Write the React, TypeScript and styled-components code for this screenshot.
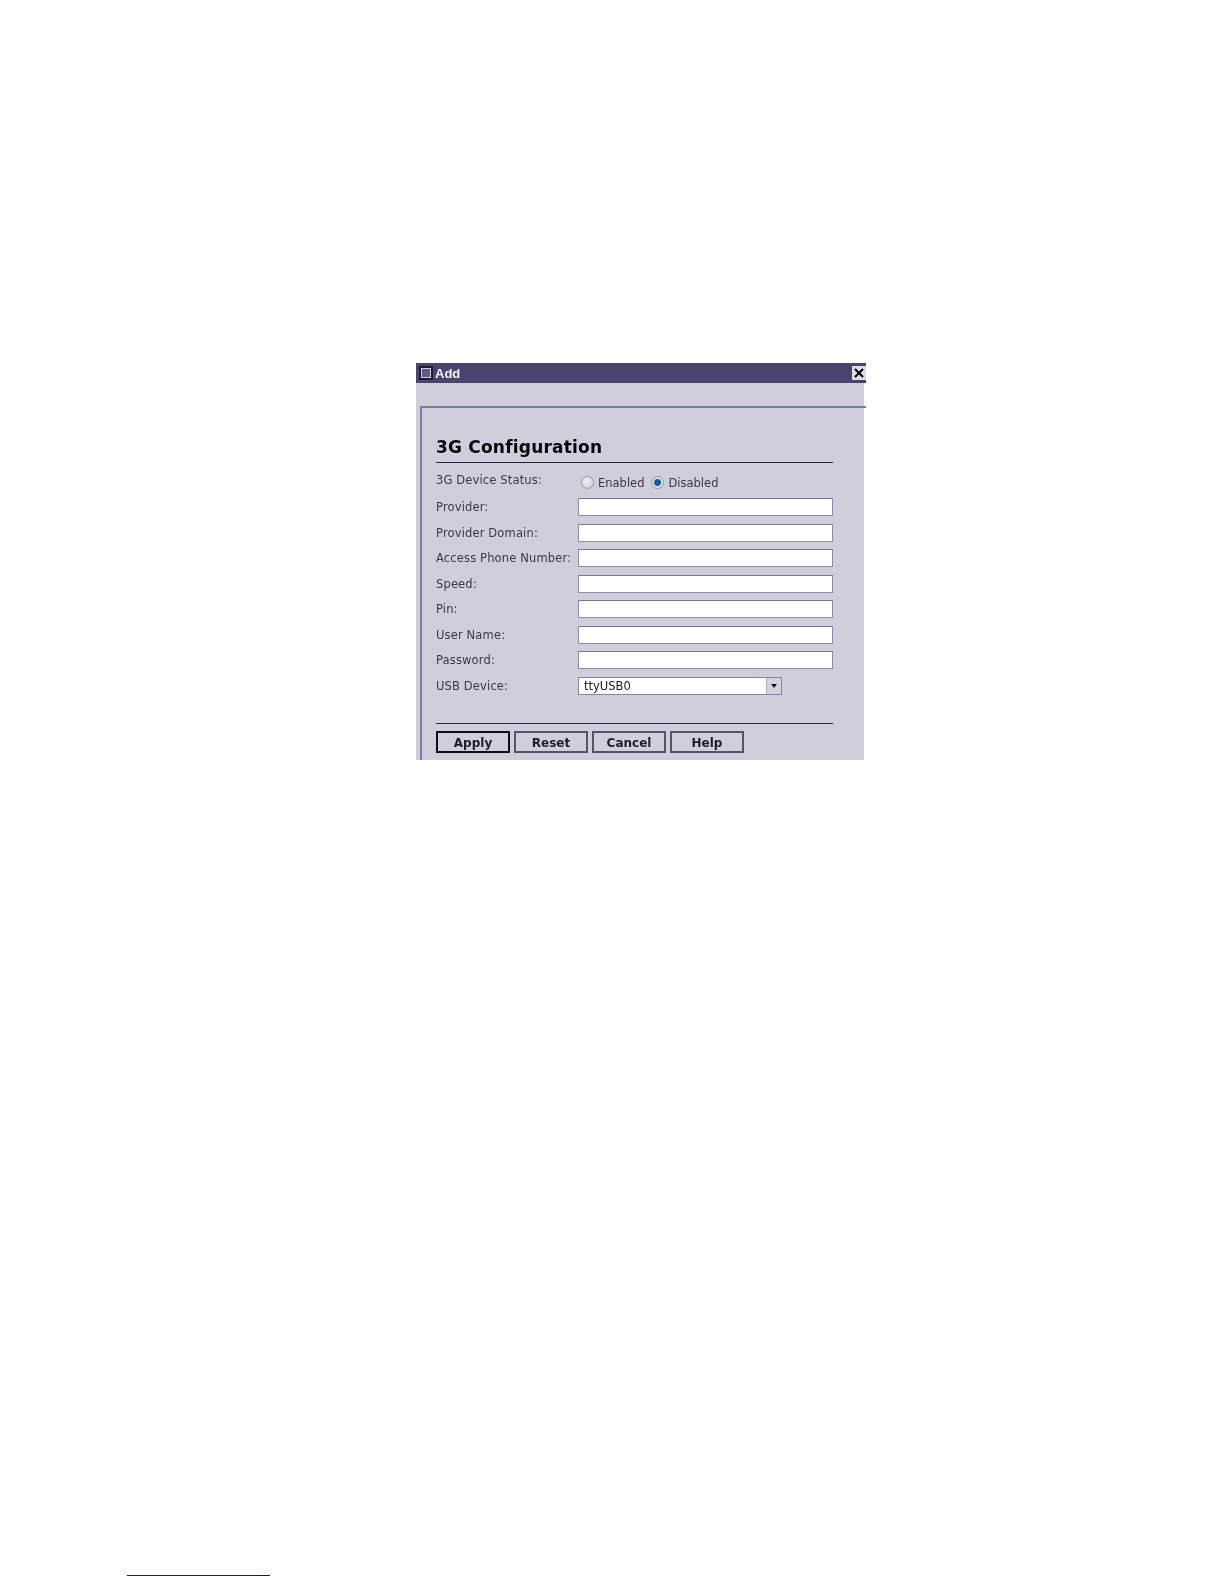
import React from "react";
import styled, { createGlobalStyle } from "styled-components";

const GlobalStyle = createGlobalStyle`
	html, body {
		margin: 0;
		padding: 0;
		background: #fefefe;
	}
	body {
		font-family: "DejaVu Sans", Verdana, sans-serif;
	}
`;

const Page = styled.div`
	height: 1584px;
	box-sizing: border-box;
	padding: 363px 0 0 416px;
	position: relative;
	overflow: hidden;
`;

const Window = styled.div`
	width: 450px;
	filter: blur(0.35px);
`;

const TitleBar = styled.div`
	height: 20px;
	background: #47456d;
	display: flex;
	align-items: center;
	padding-left: 3px;
	box-sizing: border-box;
`;

const TitleIcon = styled.span`
	width: 14px;
	height: 14px;
	box-sizing: border-box;
	background: #1e1d38;
	display: flex;
	align-items: center;
	justify-content: center;
	&::after {
		content: "";
		width: 10px;
		height: 10px;
		box-sizing: border-box;
		border: 1px solid #cfcfe0;
		background: #5d5b83;
	}
`;

const TitleText = styled.span`
	color: #f4f4f8;
	font-family: "Liberation Sans", Arial, sans-serif;
	font-weight: 700;
	font-size: 13px;
	margin-left: 2px;
	padding-top: 1px;
	flex: 1;
`;

const CloseButton = styled.span`
	width: 14px;
	height: 14px;
	background: #dcdce6;
	color: #000;
	display: flex;
	align-items: center;
	justify-content: center;
`;

const Content = styled.div`
	width: 448px;
	height: 377px;
	box-sizing: border-box;
	background: #d0cedb;
	padding: 23px 0 0 4px;
`;

const Panel = styled.div`
	width: 446px;
	height: 354px;
	box-sizing: border-box;
	border-top: 2px solid #7b79a6;
	border-left: 2px solid #7b79a6;
	padding: 25px 0 0 14px;
`;

const Heading = styled.h1`
	margin: 0;
	width: 397px;
	font-size: 17px;
	letter-spacing: 0.2px;
	line-height: 29px;
	font-weight: 700;
	color: #05050a;
	border-bottom: 1.5px solid #26253a;
`;

const Form = styled.div`
	width: 397px;
	margin-top: 6px;
	display: grid;
	grid-template-columns: 142px 255px;
	grid-auto-rows: 25.5px;
	align-items: center;
`;

const Label = styled.label<{ $lift?: boolean }>`
	font-size: 11.5px;
	letter-spacing: 0.15px;
	color: #38384a;
	white-space: nowrap;
	position: relative;
	top: ${({ $lift }) => ($lift ? "-2px" : "0")};
`;

const RadioRow = styled.div`
	display: flex;
	align-items: center;
	padding-left: 3px;
	position: relative;
	top: 1px;
`;

const Radio = styled.input.attrs({ type: "radio", readOnly: true })`
	appearance: none;
	width: 13px;
	height: 13px;
	margin: 0;
	border-radius: 50%;
	border: 1px solid #9a9aa8;
	background: radial-gradient(circle at 40% 40%, #f0f0f3, #c8c8d0);
	&:checked {
		background: radial-gradient(circle, #0f5f9e 0 3px, #dcdce6 4px);
	}
`;

const RadioLabel = styled.span`
	font-size: 11.5px;
	color: #38384a;
	margin: 0 7px 0 4px;
`;

const TextBox = styled.input.attrs({ type: "text", readOnly: true })`
	width: 255px;
	height: 18px;
	box-sizing: border-box;
	background: #fff;
	border: 1px solid #8d8ba8;
	border-top-color: #77759a;
	padding: 0;
	outline: none;
`;

const SelectBox = styled.div`
	width: 204px;
	height: 18px;
	box-sizing: border-box;
	background: #fff;
	border: 1px solid #8684a6;
	display: flex;
	align-items: center;
	justify-content: space-between;
	font-size: 11.5px;
	color: #222;
	padding-left: 5px;
`;

const SelectArrow = styled.span`
	width: 14px;
	height: 16px;
	background: #d3d2de;
	border-left: 1px solid #b0afc2;
	display: flex;
	align-items: center;
	justify-content: center;
	&::after {
		content: "";
		border-left: 3px solid transparent;
		border-right: 3px solid transparent;
		border-top: 4px solid #111;
	}
`;

const ButtonBar = styled.div`
	width: 397px;
	margin-top: 24px;
	border-top: 1.5px solid #26253a;
	padding-top: 7px;
	display: flex;
	gap: 4px;
`;

const Button = styled.button<{ $primary?: boolean }>`
	width: 74px;
	height: 22px;
	box-sizing: border-box;
	padding: 2px 0 0;
	background: #d0cedb;
	border: 2px solid ${({ $primary }) => ($primary ? "#0d0d14" : "#55546c")};
	font-family: inherit;
	font-size: 12px;
	font-weight: 700;
	color: #1c1c2c;
`;

const FootnoteRule = styled.div`
	position: absolute;
	left: 127px;
	top: 1575px;
	width: 143px;
	height: 1px;
	background: #10109a;
`;

const rows = [
	"Provider:",
	"Provider Domain:",
	"Access Phone Number:",
	"Speed:",
	"Pin:",
	"User Name:",
	"Password:",
];

export default function App() {
	return (
		<Page>
			<GlobalStyle />
			<Window>
				<TitleBar>
					<TitleIcon />
					<TitleText>Add</TitleText>
					<CloseButton>
						<svg width="10" height="10" viewBox="0 0 10 10">
							<path
								d="M1 1 L9 9 M9 1 L1 9"
								stroke="#000"
								strokeWidth="2"
								fill="none"
							/>
						</svg>
					</CloseButton>
				</TitleBar>
				<Content>
					<Panel>
						<Heading>3G Configuration</Heading>
						<Form>
							<Label $lift>3G Device Status:</Label>
							<RadioRow>
								<Radio name="status" />
								<RadioLabel>Enabled</RadioLabel>
								<Radio name="status" defaultChecked />
								<RadioLabel>Disabled</RadioLabel>
							</RadioRow>
							{rows.map((row) => (
								<React.Fragment key={row}>
									<Label>{row}</Label>
									<TextBox />
								</React.Fragment>
							))}
							<Label>USB Device:</Label>
							<SelectBox>
								ttyUSB0
								<SelectArrow />
							</SelectBox>
						</Form>
						<ButtonBar>
							<Button $primary>Apply</Button>
							<Button>Reset</Button>
							<Button>Cancel</Button>
							<Button>Help</Button>
						</ButtonBar>
					</Panel>
				</Content>
			</Window>
			<FootnoteRule />
		</Page>
	);
}
